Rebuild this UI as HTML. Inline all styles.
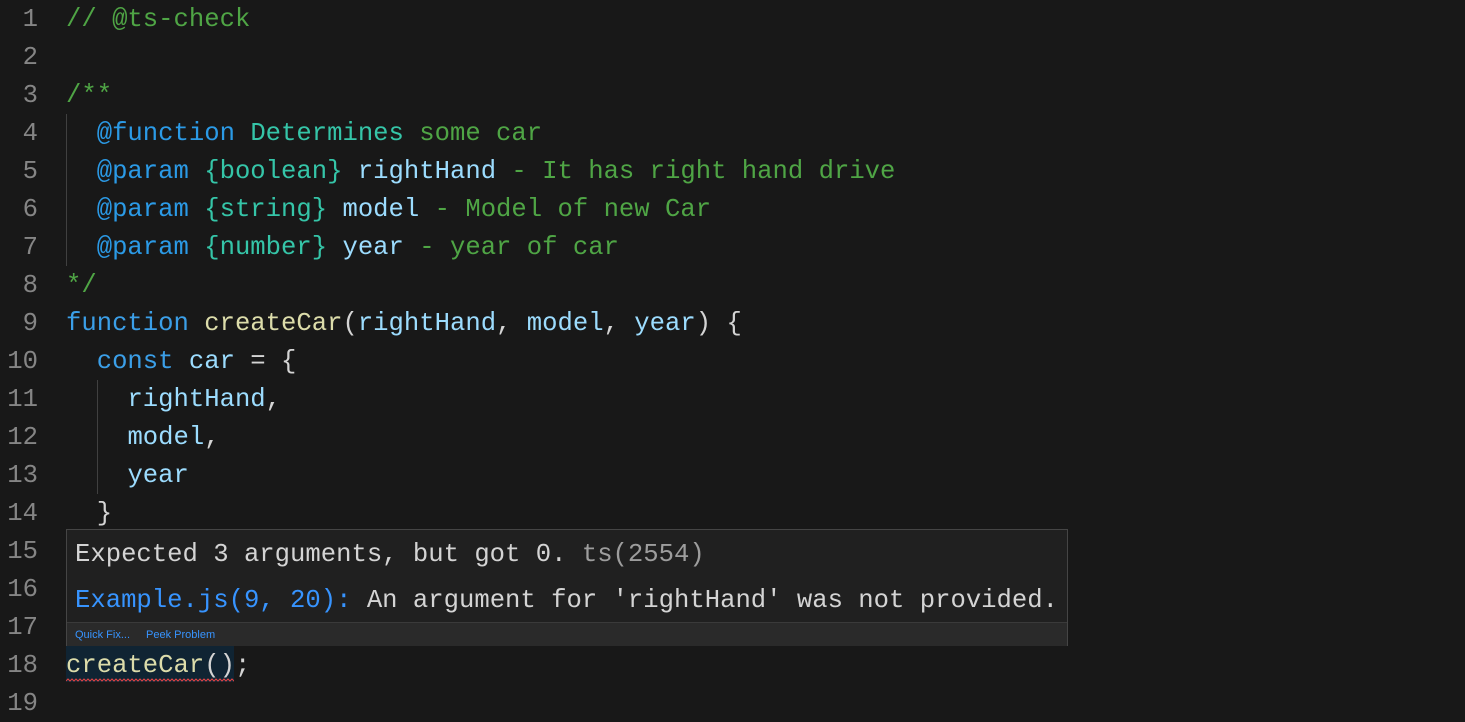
<!DOCTYPE html>
<html><head><style>
html,body{margin:0;padding:0;background:#181818;width:1465px;height:722px;overflow:hidden}
body{font-family:"Liberation Mono",monospace;font-size:25.6px;position:relative}
.ln{position:absolute;left:0;width:38px;text-align:right;color:#858585;height:38px;line-height:38px}
.cd{position:absolute;left:66px;height:38px;line-height:38px;white-space:pre;color:#d4d4d4}
.c{color:#4fa545}.t{color:#2b9ae6}.ty{color:#35c5a8}.v{color:#9cdcfe}.f{color:#dcdcaa}.k{color:#3b9fe8}
.g{position:absolute;width:1px;background:#404040}
#hov{position:absolute;left:66px;top:529px;width:1000px;height:115px;background:#202020;border:1px solid #454545}
.hl{position:absolute;left:8px;white-space:pre;color:#d4d4d4;line-height:30px}
#bar{position:absolute;left:0;top:92px;width:1000px;height:23px;background:#2a2a2a;border-top:1px solid #3a3a3a;font-family:"Liberation Sans",sans-serif;font-size:11px;color:#3794ff;line-height:24px}
</style></head><body>
<div class="g" style="left:66px;top:114px;height:152px"></div>
<div class="g" style="left:97px;top:380px;height:114px"></div>
<div class="ln" style="top:1px">1</div><div class="cd" style="top:1px"><span class="c">// @ts-check</span></div>
<div class="ln" style="top:39px">2</div>
<div class="ln" style="top:77px">3</div><div class="cd" style="top:77px"><span class="c">/**</span></div>
<div class="ln" style="top:115px">4</div><div class="cd" style="top:115px">  <span class="t">@function</span> <span class="ty">Determines</span><span class="c"> some car</span></div>
<div class="ln" style="top:153px">5</div><div class="cd" style="top:153px">  <span class="t">@param</span> <span class="ty">{boolean}</span> <span class="v">rightHand</span><span class="c"> - It has right hand drive</span></div>
<div class="ln" style="top:191px">6</div><div class="cd" style="top:191px">  <span class="t">@param</span> <span class="ty">{string}</span> <span class="v">model</span><span class="c"> - Model of new Car</span></div>
<div class="ln" style="top:229px">7</div><div class="cd" style="top:229px">  <span class="t">@param</span> <span class="ty">{number}</span> <span class="v">year</span><span class="c"> - year of car</span></div>
<div class="ln" style="top:267px">8</div><div class="cd" style="top:267px"><span class="c">*/</span></div>
<div class="ln" style="top:305px">9</div><div class="cd" style="top:305px"><span class="k">function</span> <span class="f">createCar</span>(<span class="v">rightHand</span>, <span class="v">model</span>, <span class="v">year</span>) {</div>
<div class="ln" style="top:343px">10</div><div class="cd" style="top:343px">  <span class="k">const</span> <span class="v">car</span> = {</div>
<div class="ln" style="top:381px">11</div><div class="cd" style="top:381px">    <span class="v">rightHand</span>,</div>
<div class="ln" style="top:419px">12</div><div class="cd" style="top:419px">    <span class="v">model</span>,</div>
<div class="ln" style="top:457px">13</div><div class="cd" style="top:457px">    <span class="v">year</span></div>
<div class="ln" style="top:495px">14</div><div class="cd" style="top:495px">  }</div>
<div class="ln" style="top:533px">15</div>
<div class="ln" style="top:571px">16</div>
<div class="ln" style="top:609px">17</div>
<div class="ln" style="top:647px">18</div>
<div style="position:absolute;left:66px;top:646px;width:168px;height:36px;background:#102433"></div>
<svg style="position:absolute;left:66px;top:678px" width="168" height="5"><path d="M0 3 l2 -2 l2 2 l2 -2 l2 2 l2 -2 l2 2 l2 -2 l2 2 l2 -2 l2 2 l2 -2 l2 2 l2 -2 l2 2 l2 -2 l2 2 l2 -2 l2 2 l2 -2 l2 2 l2 -2 l2 2 l2 -2 l2 2 l2 -2 l2 2 l2 -2 l2 2 l2 -2 l2 2 l2 -2 l2 2 l2 -2 l2 2 l2 -2 l2 2 l2 -2 l2 2 l2 -2 l2 2 l2 -2 l2 2 l2 -2 l2 2 l2 -2 l2 2 l2 -2 l2 2 l2 -2 l2 2 l2 -2 l2 2 l2 -2 l2 2 l2 -2 l2 2 l2 -2 l2 2 l2 -2 l2 2 l2 -2 l2 2 l2 -2 l2 2 l2 -2 l2 2 l2 -2 l2 2 l2 -2 l2 2 l2 -2 l2 2 l2 -2 l2 2 l2 -2 l2 2 l2 -2 l2 2 l2 -2 l2 2 l2 -2 l2 2 l2 -2 l2 2 l2 -2 l2 2 l2 -2" fill="none" stroke="#e04444" stroke-width="1"/></svg>
<div class="cd" style="top:647px"><span class="f">createCar</span>();</div>
<div class="ln" style="top:685px">19</div>
<div id="hov">
<div class="hl" style="top:10px">Expected 3 arguments, but got 0.<span style="color:#9d9d9d"> ts(2554)</span></div>
<div class="hl" style="top:56px"><span style="color:#3794ff">Example.js(9, 20):</span> An argument for 'rightHand' was not provided.</div>
<div id="bar"><span style="margin-left:8px">Quick Fix...</span><span style="margin-left:16px">Peek Problem</span></div>
</div>
</body></html>
